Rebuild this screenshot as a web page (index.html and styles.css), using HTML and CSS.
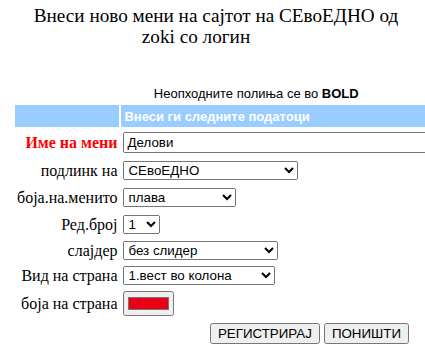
FILE: index.html
```html
<!DOCTYPE html>
<html>
    <head>
        <link rel="stylesheet" href="styles.css">
    </head>
    <body>
        <h1 class="title">Внеси ново мени на сајтот на СЕвоЕДНО од zoki <span class="title-end">со логин</span></h1>
        <form class="menu-form" onsubmit="return false;">
            <table class="form-table">
                <tr>
                    <td colspan="2" class="note">Неопходните полиња се во <b>BOLD</b></td>
                </tr>
                <tr class="head-row">
                    <td></td>
                    <td>Внеси ги следните податоци</td>
                </tr>
                <tr>
                    <td class="label required">Име на мени</td>
                    <td class="field"><input type="text" class="text-input" value="Делови"></td>
                </tr>
                <tr>
                    <td class="label">подлинк на</td>
                    <td class="field">
                        <select class="sel-parent">
                            <option>СЕвоЕДНО</option>
                            <option>Делови</option>
                        </select>
                    </td>
                </tr>
                <tr>
                    <td class="label">боја.на.менито</td>
                    <td class="field">
                        <select class="sel-color">
                            <option>плава</option>
                            <option>црвена</option>
                            <option>зелена</option>
                        </select>
                    </td>
                </tr>
                <tr>
                    <td class="label">Ред.број</td>
                    <td class="field">
                        <select class="sel-order">
                            <option>1</option>
                            <option>2</option>
                            <option>3</option>
                        </select>
                    </td>
                </tr>
                <tr class="tight">
                    <td class="label">слајдер</td>
                    <td class="field">
                        <select class="sel-slider">
                            <option>без слидер</option>
                            <option>со слидер</option>
                        </select>
                    </td>
                </tr>
                <tr class="tight">
                    <td class="label">Вид на страна</td>
                    <td class="field">
                        <select class="sel-layout">
                            <option>1.вест во колона</option>
                            <option>2.вести во колона</option>
                        </select>
                    </td>
                </tr>
                <tr class="tight">
                    <td class="label">боја на страна</td>
                    <td class="field"><input type="color" class="color-input" value="#ea0016"></td>
                </tr>
                <tr>
                    <td></td>
                    <td class="actions">
                        <button type="submit">РЕГИСТРИРАЈ</button>
                        <button type="reset">ПОНИШТИ</button>
                    </td>
                </tr>
            </table>
        </form>
    </body>
</html>
```

FILE: styles.css
```css
body {
    margin: 0;
    font-family: "Liberation Serif", "Times New Roman", serif;
    font-size: 16px;
    color: #000;
    background-color: #fff;
}
.title {
    margin: 5px 0 0 0;
    padding: 0 16px 0 23px;
    font-size: 19.2px;
    line-height: 21px;
    font-weight: normal;
    text-align: center;
}
.title-end {
    margin-right: 40px;
}
.form-table {
    margin: 35px 0 0 13px;
    width: 486px;
    border-spacing: 2px;
}
.form-table td {
    padding: 3px 2px;
}
.form-table .note {
    padding: 2px;
    text-align: center;
    font-family: "Liberation Sans", Arial, sans-serif;
    font-size: 13px;
}
.head-row td {
    background-color: #99ccff;
    color: #fff;
    font-family: "Liberation Sans", Arial, sans-serif;
    font-size: 13px;
    font-weight: bold;
    height: 16px;
    padding: 3px;
}
.label {
    width: 100px;
    text-align: right;
    white-space: nowrap;
}
.required {
    color: #ff0000;
    font-weight: bold;
}
.tight td {
    padding-top: 2px;
    padding-bottom: 2px;
}
.text-input {
    width: 372px;
    box-sizing: border-box;
}
.sel-parent {
    width: 175px;
}
.sel-color {
    width: 113px;
}
.sel-order {
    width: 37px;
}
.sel-slider {
    width: 155px;
}
.sel-layout {
    width: 152px;
}
.color-input {
    width: 51px;
    height: 25px;
    margin: 0;
}
.actions {
    text-align: center;
    padding-top: 6px;
}
```
